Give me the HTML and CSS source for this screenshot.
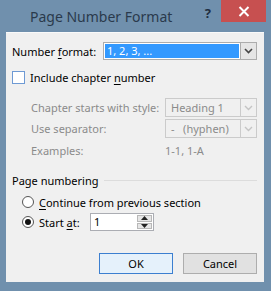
FILE: index.html
```html
<!doctype html>
<html lang="en">
<head>
    <meta charset="UTF-8">
    <title>Page Number Format</title>
    <link rel="stylesheet" href="styles.css">
</head>
<body>
    <div class="dialog">
        <div class="titlebar">
            <span class="title">Page Number Format</span>
            <span class="help">?</span>
            <span class="close">
                <svg width="12" height="11" viewBox="0 0 12 11"><path d="M1.5 1 L10.5 10 M10.5 1 L1.5 10" stroke="#fff" stroke-width="2"/></svg>
            </span>
        </div>
        <div class="content">
            <div class="row format-row">
                <span class="label">Number <u>f</u>ormat:</span>
                <div class="combo active">
                    <span class="value"><span class="sel">1, 2, 3, ...</span></span>
                    <span class="arrow">
                        <svg width="9" height="6" viewBox="0 0 9 6"><path d="M1 1 L4.5 4.5 L8 1" fill="none" stroke="#444" stroke-width="1.6"/></svg>
                    </span>
                </div>
            </div>
            <div class="row check-row">
                <span class="checkbox"></span>
                <span>Include chapter <u>n</u>umber</span>
            </div>
            <div class="row sub-row first">
                <span class="label sub">Chapter starts with style:</span>
                <div class="combo disabled">
                    <span class="value">Heading 1</span>
                    <span class="arrow">
                        <svg width="9" height="6" viewBox="0 0 9 6"><path d="M1 1 L4.5 4.5 L8 1" fill="none" stroke="#c4c4c4" stroke-width="1.4"/></svg>
                    </span>
                </div>
            </div>
            <div class="row sub-row">
                <span class="label sub">Use separator:</span>
                <div class="combo disabled">
                    <span class="value">-&nbsp;&nbsp;&nbsp;(hyphen)</span>
                    <span class="arrow">
                        <svg width="9" height="6" viewBox="0 0 9 6"><path d="M1 1 L4.5 4.5 L8 1" fill="none" stroke="#c4c4c4" stroke-width="1.4"/></svg>
                    </span>
                </div>
            </div>
            <div class="row sub-row examples">
                <span class="label sub">Examples:</span>
                <span class="example">1-1, 1-A</span>
            </div>
            <div class="row group-row">
                <span>Page numbering</span>
                <span class="rule"></span>
            </div>
            <div class="row radio-row">
                <span class="radio"></span>
                <span><u>C</u>ontinue from previous section</span>
            </div>
            <div class="row radio-row start">
                <span class="radio checked"></span>
                <span class="start-label">Start <u>a</u>t:</span>
                <div class="spin">
                    <span class="spin-value">1</span>
                    <span class="spin-btns">
                        <span class="spin-btn"><svg width="7" height="4" viewBox="0 0 7 4"><path d="M0 4 L3.5 0 L7 4 Z" fill="#222"/></svg></span>
                        <span class="spin-btn"><svg width="7" height="4" viewBox="0 0 7 4"><path d="M0 0 L3.5 4 L7 0 Z" fill="#222"/></svg></span>
                    </span>
                </div>
            </div>
            <div class="buttons">
                <span class="button default">OK</span>
                <span class="button">Cancel</span>
            </div>
        </div>
    </div>
</body>
</html>
```
FILE: styles.css
```css
*{
    margin: 0;
    padding: 0;
    box-sizing: border-box;
}
html,body{
    width: 100%;
    height: 100%;
    overflow: hidden;
}
body{
    background: #7090ad;
    font-family: "Noto Sans", "Open Sans", sans-serif;
    font-size: 11px;
    color: #000;
    white-space: nowrap;
}
u{
    text-decoration: underline;
    text-underline-offset: 2px;
}
.dialog{
    width: 271px;
    height: 291px;
    display: flex;
    flex-direction: column;
}
.titlebar{
    height: 32px;
    display: flex;
    align-items: flex-start;
}
.titlebar .title{
    margin: 6px 0 0 30px;
    font-size: 14px;
    color: #2a3a4c;
    line-height: 22px;
}
.titlebar .help{
    margin: 5px 0 0 auto;
    font-size: 13px;
    font-weight: bold;
    color: #1e2e40;
    line-height: 16px;
}
.titlebar .close{
    margin: 0 5px 0 10px;
    width: 45px;
    height: 22px;
    background: #c75050;
    display: flex;
    justify-content: center;
    align-items: center;
}
.content{
    margin: 0 7px 9px 6px;
    flex: 1;
    background: #f0f0f0;
    border-top: 1px solid #fafafa;
    padding: 0 7px 0 6px;
}
.row{
    display: flex;
    align-items: center;
    height: 18px;
}
.label{
    width: 91px;
}
.label.sub{
    width: 153px;
    padding-left: 19px;
    color: #8b8b8b;
}
.format-row{
    margin-top: 9px;
}
.combo{
    flex: 1;
    height: 18px;
    display: flex;
    border: 1px solid #acacac;
    background: #fff;
}
.combo .value{
    flex: 1;
    display: flex;
    align-items: center;
    padding: 1px;
}
.combo .sel{
    flex: 1;
    height: 100%;
    background: #3399ff;
    color: #fff;
    padding-left: 2px;
    line-height: 14px;
}
.combo .arrow{
    width: 16px;
    display: flex;
    justify-content: center;
    align-items: center;
    background: #e5e5e5;
    border-left: 1px solid #acacac;
}
.combo.disabled{
    height: 19px;
    background: #f0f0f0;
    border-color: #cbcbcb;
}
.combo.disabled .value{
    color: #8b8b8b;
    padding-left: 5px;
}
.combo.disabled .arrow{
    background: #f0f0f0;
    border-left-color: #cbcbcb;
}
.check-row{
    margin-top: 8px;
}
.checkbox{
    width: 13px;
    height: 13px;
    border: 1px solid #6e9ad4;
    background: #fff;
    margin-right: 5px;
}
.sub-row{
    height: 19px;
    margin-top: 2px;
}
.sub-row.first{
    margin-top: 12px;
}
.examples{
    height: 20px;
    margin-top: 2px;
}
.example{
    color: #8b8b8b;
}
.group-row{
    margin-top: 11px;
}
.group-row .rule{
    flex: 1;
    height: 1px;
    background: #dcdcdc;
    margin-left: 6px;
}
.radio-row{
    margin-top: 4px;
    padding-left: 10px;
}
.radio-row.start{
    margin-top: 2px;
}
.radio{
    width: 12px;
    height: 12px;
    border: 1px solid #555;
    border-radius: 50%;
    background: #fff;
    margin-right: 5px;
    display: flex;
    justify-content: center;
    align-items: center;
}
.radio.checked::after{
    content: "";
    width: 6px;
    height: 6px;
    border-radius: 50%;
    background: #111;
}
.start-label{
    width: 51px;
}
.spin{
    width: 64px;
    height: 18px;
    border: 1px solid #abadb3;
    background: #fff;
    display: flex;
}
.spin-value{
    flex: 1;
    padding-left: 3px;
    line-height: 16px;
}
.spin-btns{
    width: 15px;
    margin: 1px 1px 1px 0;
    display: flex;
    flex-direction: column;
    gap: 1px;
}
.spin-btn{
    flex: 1;
    background: #e6e6e6;
    border: 1px solid #b8b8b8;
    display: flex;
    justify-content: center;
    align-items: center;
}
.buttons{
    margin-top: 22px;
    display: flex;
    justify-content: flex-end;
    gap: 10px;
}
.button{
    width: 74px;
    height: 21px;
    border: 1px solid #adadad;
    background: #e1e1e1;
    display: flex;
    justify-content: center;
    align-items: center;
}
.button.default{
    border-color: #3c7fd0;
    background: #e5f1fb;
}
```
